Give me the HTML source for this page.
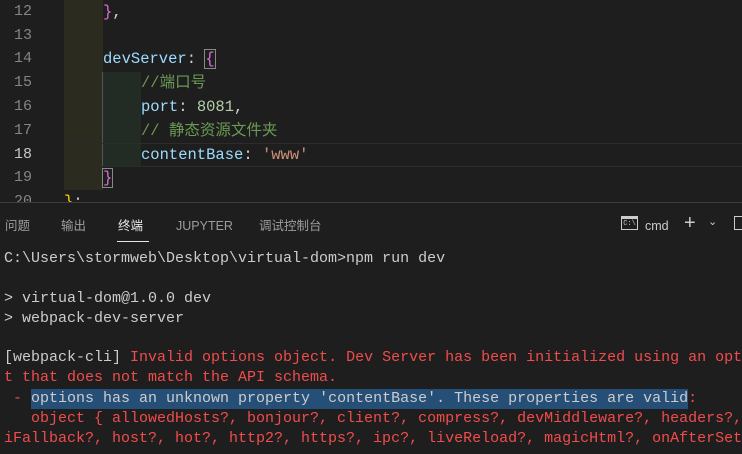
<!DOCTYPE html>
<html><head><meta charset="utf-8"><style>
body{margin:0;width:742px;height:453px;background:#1e1e1e;overflow:hidden;position:relative;font-family:"Liberation Mono","Noto Sans CJK SC",monospace;}
.ln{position:absolute;left:0;width:32px;text-align:right;color:#858585;font-size:15px;line-height:20px;}
.c{position:absolute;font-size:15.5px;line-height:20px;white-space:pre;color:#d4d4d4;}
.band{position:absolute;}
.t{position:absolute;white-space:pre;font-size:15px;line-height:20px;color:#cccccc;}
.r{color:#f14c4c;}
.tab{position:absolute;top:217px;line-height:18px;font-family:"Liberation Sans","Noto Sans CJK SC",sans-serif;font-size:12.5px;color:#9d9d9d;}
</style></head><body>
<div class="band" style="left:64px;top:0;width:39px;height:190px;background:#2b2b20"></div>
<div class="band" style="left:103px;top:72px;width:38px;height:95px;background:#232b25"></div>
<div class="band" style="left:102px;top:72px;width:1px;height:95px;background:#555"></div>
<div class="band" style="left:64px;top:143px;width:678px;height:24px;border-top:1px solid #2c2c2c;border-bottom:1px solid #2c2c2c;box-sizing:border-box"></div>

<div class="ln" style="top:2px">12</div>
<div class="ln" style="top:26px">13</div>
<div class="ln" style="top:49px">14</div>
<div class="ln" style="top:73px">15</div>
<div class="ln" style="top:97px">16</div>
<div class="ln" style="top:121px">17</div>
<div class="ln" style="top:145px;color:#c6c6c6">18</div>
<div class="ln" style="top:168px">19</div>
<div class="ln" style="top:192px">20</div>

<div class="c" style="left:103px;top:2px"><span style="color:#da70d6">}</span>,</div>
<div class="c" style="left:103px;top:49px"><span style="color:#9cdcfe">devServer</span>: <span style="color:#da70d6;outline:1px solid #888">{</span></div>
<div class="c" style="left:141px;top:73px;color:#6a9955">//端口号</div>
<div class="c" style="left:141px;top:97px"><span style="color:#9cdcfe">port</span>: <span style="color:#b5cea8">8081</span>,</div>
<div class="c" style="left:141px;top:121px;color:#6a9955">// 静态资源文件夹</div>
<div class="c" style="left:141px;top:145px"><span style="color:#9cdcfe">contentBase</span>: <span style="color:#ce9178">'www'</span></div>
<div class="c" style="left:103px;top:168px"><span style="color:#da70d6;outline:1px solid #888">}</span></div>
<div class="c" style="left:64px;top:192px"><span style="color:#ffd700">}</span>;</div>

<div style="position:absolute;left:0;top:202px;width:742px;height:251px;background:#1e1e1e;border-top:1px solid #3c3c3c"></div>
<div class="tab" style="left:5px">问题</div>
<div class="tab" style="left:61px">输出</div>
<div class="tab" style="left:118px;color:#e7e7e7">终端</div>
<div style="position:absolute;left:117px;top:241px;width:32px;height:1px;background:#e7e7e7"></div>
<div class="tab" style="left:176px">JUPYTER</div>
<div class="tab" style="left:259px">调试控制台</div>
<div style="position:absolute;left:621px;top:216px;width:17px;height:14px;border:1px solid #ccc;box-sizing:border-box;font-size:7px;color:#ccc;line-height:11px;text-align:center;border-top-width:3px">C:\</div>
<div class="tab" style="left:645px;color:#ccc">cmd</div>
<div style="position:absolute;left:684px;top:212px;font-size:20px;color:#ccc;font-family:'Liberation Sans'">+</div>
<div style="position:absolute;left:708px;top:215px;font-size:11px;color:#ccc;font-family:'Liberation Sans'">⌄</div>
<div style="position:absolute;left:734px;top:216px;width:10px;height:14px;border:1px solid #ccc;box-sizing:border-box"></div>

<div style="position:absolute;left:31px;top:389px;width:657px;height:20px;background:#264f78"></div>
<div class="t" style="left:4px;top:249px">C:\Users\stormweb\Desktop\virtual-dom>npm run dev</div>
<div class="t" style="left:4px;top:289px">> virtual-dom@1.0.0 dev</div>
<div class="t" style="left:4px;top:309px">> webpack-dev-server</div>
<div class="t" style="left:4px;top:348px">[webpack-cli] <span class="r">Invalid options object. Dev Server has been initialized using an options</span></div>
<div class="t r" style="left:4px;top:368px">t that does not match the API schema.</div>
<div class="t r" style="left:4px;top:389px"> - <span style="color:#ccc">options has an unknown property 'contentBase'. These properties are valid</span>:</div>
<div class="t r" style="left:4px;top:409px">   object { allowedHosts?, bonjour?, client?, compress?, devMiddleware?, headers?, </div>
<div class="t r" style="left:4px;top:429px">iFallback?, host?, hot?, http2?, https?, ipc?, liveReload?, magicHtml?, onAfterSetup</div>
</body></html>
